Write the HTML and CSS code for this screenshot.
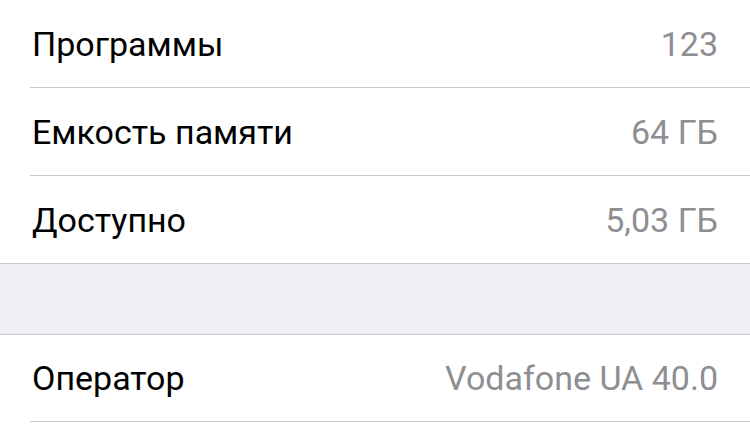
FILE: index.html
```html
<!DOCTYPE html>
<html><head><meta charset="utf-8"><link rel="stylesheet" href="styles.css"></head>
<body>
<div class="page">
  <div class="group">
    <div class="row"><span class="label">Программы</span><span class="value">123</span></div>
    <div class="row"><span class="label">Емкость памяти</span><span class="value">64 ГБ</span></div>
    <div class="row"><span class="label">Доступно</span><span class="value">5,03 ГБ</span></div>
  </div>
  <div class="spacer"></div>
  <div class="group">
    <div class="row row-short"><span class="label">Оператор</span><span class="value">Vodafone UA 40.0</span></div>
    <div class="row row-tail"></div>
  </div>
</div>
</body></html>
```
FILE: styles.css
```css
html,body{margin:0;padding:0;background:#fff}
.page{width:750px;height:427px;overflow:hidden;font-family:Roboto,"Noto Sans",sans-serif;display:flex;flex-direction:column}
.group{background:#fff;display:flex;flex-direction:column}
.group + .spacer{border-top:1px solid #c8c7cc;border-bottom:1px solid #c8c7cc}
.spacer{height:70px;background:#efeff4;flex:none}
.row{height:87px;flex:none;display:flex;align-items:center;justify-content:space-between;padding:0 32px 0 32px;position:relative;font-size:34px;line-height:40px}
.row::after{content:"";position:absolute;left:30px;right:0;bottom:-1px;height:1px;background:#c8c7cc}
.row{margin-bottom:1px}
.group:first-child .row:last-child{margin-bottom:0}
.group:first-child .row:last-child::after{display:none}
.row-short{height:86px}
.row-tail::after{display:none}
.label{color:#000}
.value{color:#8e8e93}
```
